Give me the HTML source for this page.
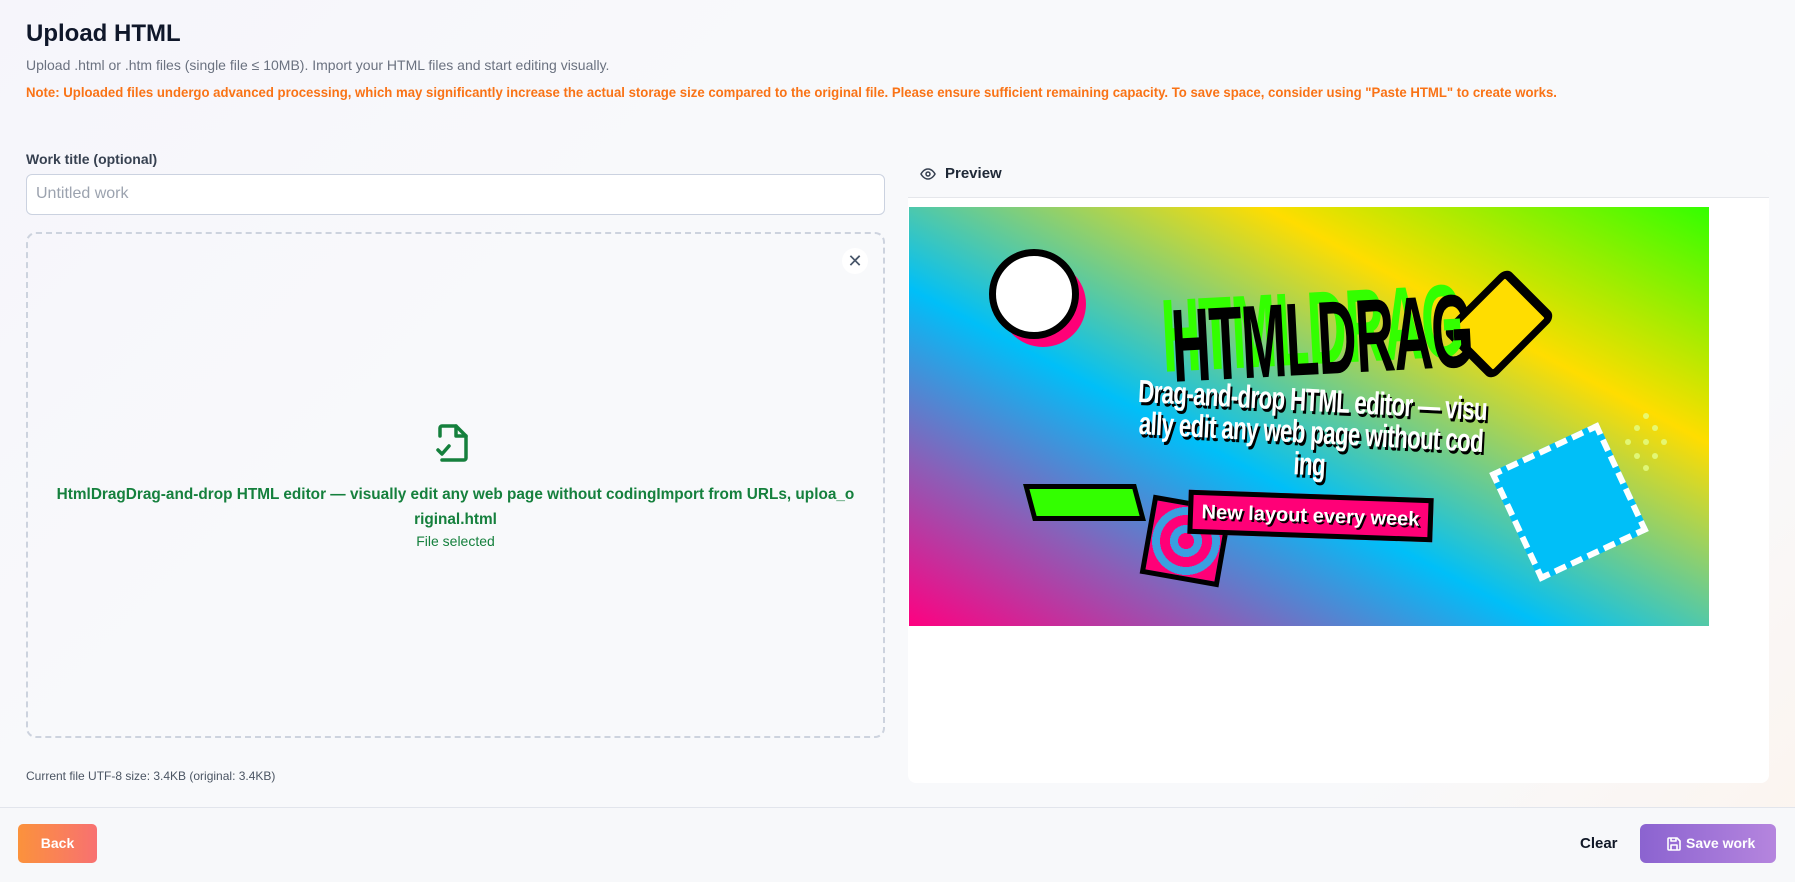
<!DOCTYPE html>
<html><head><meta charset="utf-8">
<style>
*{box-sizing:border-box;margin:0;padding:0}
body{width:1795px;height:882px;overflow:hidden;font-family:"Liberation Sans",sans-serif;background:linear-gradient(135deg,#f6f5fb 0%,#f8f9fb 30%,#f8f9fb 80%,#fcf4ee 100%);position:relative;color:#111827}
.abs{position:absolute}
h1{position:absolute;left:26px;top:20px;font-size:24px;font-weight:700;color:#0f172a}
.sub{left:26px;top:57px;font-size:14px;color:#6b7280}
.note{left:26px;top:84px;font-size:14px;color:#f97316;font-weight:700;white-space:nowrap;transform:scaleX(.94);transform-origin:left top}
.lbl{left:26px;top:151px;font-size:14px;font-weight:700;color:#374151}
.inp{left:26px;top:174px;width:859px;height:41px;border:1px solid #cbd2e0;border-radius:6px;background:#fff;font-size:16px;color:#9ca3af;padding:10px 9px}
.drop{left:26px;top:232px;width:859px;height:506px;border:2px dashed #cdd3de;border-radius:10px}
.close{left:842px;top:248px;width:26px;height:26px;border-radius:50%;background:#fff;color:#475569;font-size:18px;text-align:center;line-height:26px}
.gt{left:26px;width:859px;text-align:center;color:#15803d;font-size:16px;font-weight:700;line-height:25px;top:482px;white-space:nowrap;transform:scaleX(.96)}
.fs{left:26px;width:859px;text-align:center;top:533px;color:#15803d;font-size:14px}
.cur{left:26px;top:769px;font-size:12px;color:#4b5563}
.foot{left:0;top:807px;width:1795px;height:75px;border-top:1px solid #e2e5ec;background:#f7f8fa}
.back{left:18px;top:824px;width:79px;height:39px;border-radius:5px;background:linear-gradient(90deg,#fb923c,#f87171);color:#fff;font-weight:700;font-size:14px;text-align:center;line-height:39px}
.clear{left:1580px;top:835px;font-size:15px;font-weight:700;color:#111827}
.save{left:1640px;top:824px;width:136px;height:39px;border-radius:6px;background:linear-gradient(90deg,#8b63d0,#b585de);color:#fff;font-weight:700;font-size:14px;line-height:39px;padding-left:46px}
.prev{left:908px;top:150px;width:861px;height:633px;background:#fff;border-radius:8px;overflow:hidden}
.ph{height:48px;background:#f8f9fb;border-bottom:1px solid #e5e7eb;font-size:15px;font-weight:700;padding:15px 0 0 37px;color:#1f2937;position:relative}
.img{left:1px;top:57px;width:800px;height:419px;background:linear-gradient(28deg,#ff0080 0%,#8a5fb8 20%,#00bff8 40%,#ffdd00 72%,#33ff00 100%);overflow:hidden}
.big{font-weight:900;font-size:104px;line-height:100px;white-space:nowrap;letter-spacing:-2px;transform-origin:left top}
</style></head><body>
<h1>Upload HTML</h1>
<div class="abs sub">Upload .html or .htm files (single file ≤ 10MB). Import your HTML files and start editing visually.</div>
<div class="abs note">Note: Uploaded files undergo advanced processing, which may significantly increase the actual storage size compared to the original file. Please ensure sufficient remaining capacity. To save space, consider using "Paste HTML" to create works.</div>
<div class="abs lbl">Work title (optional)</div>
<div class="abs inp">Untitled work</div>
<div class="abs drop"></div>
<div class="abs close">✕</div>
<svg class="abs" style="left:434px;top:422px" width="40" height="42" viewBox="0 0 40 42" fill="none" stroke="#15803d" stroke-width="3.5" stroke-linejoin="round" stroke-linecap="round"><path d="M6 14V6a2 2 0 0 1 2-2h14l10 10v22a2 2 0 0 1-2 2H8"/><path d="M22 4v10h10"/><path d="M4 28l4 4 7-8"/></svg>
<div class="abs gt">HtmlDragDrag-and-drop HTML editor — visually edit any web page without codingImport from URLs, uploa_o<br>riginal.html</div>
<div class="abs fs">File selected</div>
<div class="abs cur">Current file UTF-8 size: 3.4KB (original: 3.4KB)</div>

<div class="abs prev">
 <div class="ph"><svg style="position:absolute;left:12px;top:17px" width="16" height="14" viewBox="0 0 16 14" fill="none" stroke="#374151" stroke-width="1.5"><path d="M1 7s2.5-5 7-5 7 5 7 5-2.5 5-7 5-7-5-7-5z"/><circle cx="8" cy="7" r="2"/></svg>Preview</div>
 <div class="abs img">
  <div class="abs" style="left:91px;top:54px;width:86px;height:86px;border-radius:50%;background:#ff0077"></div>
  <div class="abs" style="left:80px;top:42px;width:90px;height:90px;border-radius:50%;background:#fff;border:7px solid #000"></div>
  <div class="abs" style="left:555px;top:82px;width:70px;height:70px;background:#ffdd00;border:7px solid #000;border-radius:8px;transform:rotate(45deg) scaleY(1.3)"></div>
  <div class="abs big" style="left:250px;top:80px;color:#33ff00;transform:rotate(-3deg) scaleX(.52)">HTMLDRAG</div>
  <div class="abs big" style="left:260px;top:90px;color:#000;transform:rotate(-3deg) scaleX(.52)">HTMLDRAG</div>
  <div class="abs" style="left:102px;top:177px;width:600px;text-align:center;font-weight:900;font-size:32px;line-height:32px;color:#fff;text-shadow:3px 3px 0 #000;white-space:nowrap;transform:rotate(3deg) scaleX(.7);letter-spacing:-1px">Drag-and-drop HTML editor — visu<br>ally edit any web page without cod<br>ing</div>
  <div class="abs" style="left:119px;top:277px;width:113px;height:37px;background:#33ff00;border:5px solid #000;transform:skewX(15deg)"></div>
  <div class="abs" style="left:237px;top:294px;width:80px;height:80px;border:5px solid #000;transform:rotate(10deg);background:radial-gradient(circle,#ff0077 0 8px,#3aa0e0 8px 16px,#ff0077 16px 26px,#3aa0e0 26px 34px,#ff0077 34px)"></div>
  <div class="abs" style="left:279px;top:287px;width:245px;height:44px;background:#ff0077;border:5px solid #000;transform:rotate(2deg);color:#fff;font-weight:700;font-size:20px;line-height:34px;text-align:center;text-shadow:2px 2px 0 #000">New layout every week</div>
  <div class="abs" style="left:600px;top:235px;width:120px;height:120px;background:#00bff8;border:6px dashed #fff;transform:rotate(-25deg)"></div>
  <svg class="abs" style="left:710px;top:205px" width="54" height="60"><g fill="#e5ff88" opacity=".8"><circle cx="27" cy="4" r="3"/><circle cx="18" cy="16" r="3"/><circle cx="36" cy="16" r="3"/><circle cx="9" cy="30" r="3"/><circle cx="27" cy="30" r="3"/><circle cx="45" cy="30" r="3"/><circle cx="18" cy="44" r="3"/><circle cx="36" cy="44" r="3"/><circle cx="27" cy="56" r="3"/></g></svg>
 </div>
</div>

<div class="abs foot"></div>
<div class="abs back">Back</div>
<div class="abs clear">Clear</div>
<div class="abs save"><svg style="position:absolute;left:26px;top:12px" width="16" height="16" viewBox="0 0 16 16" fill="none" stroke="#fff" stroke-width="1.6" stroke-linejoin="round"><path d="M2 3a1 1 0 0 1 1-1h8l3 3v8a1 1 0 0 1-1 1H3a1 1 0 0 1-1-1z"/><path d="M5 2v3h5V2M5 14V9h6v5"/></svg>Save work</div>
</body></html>
